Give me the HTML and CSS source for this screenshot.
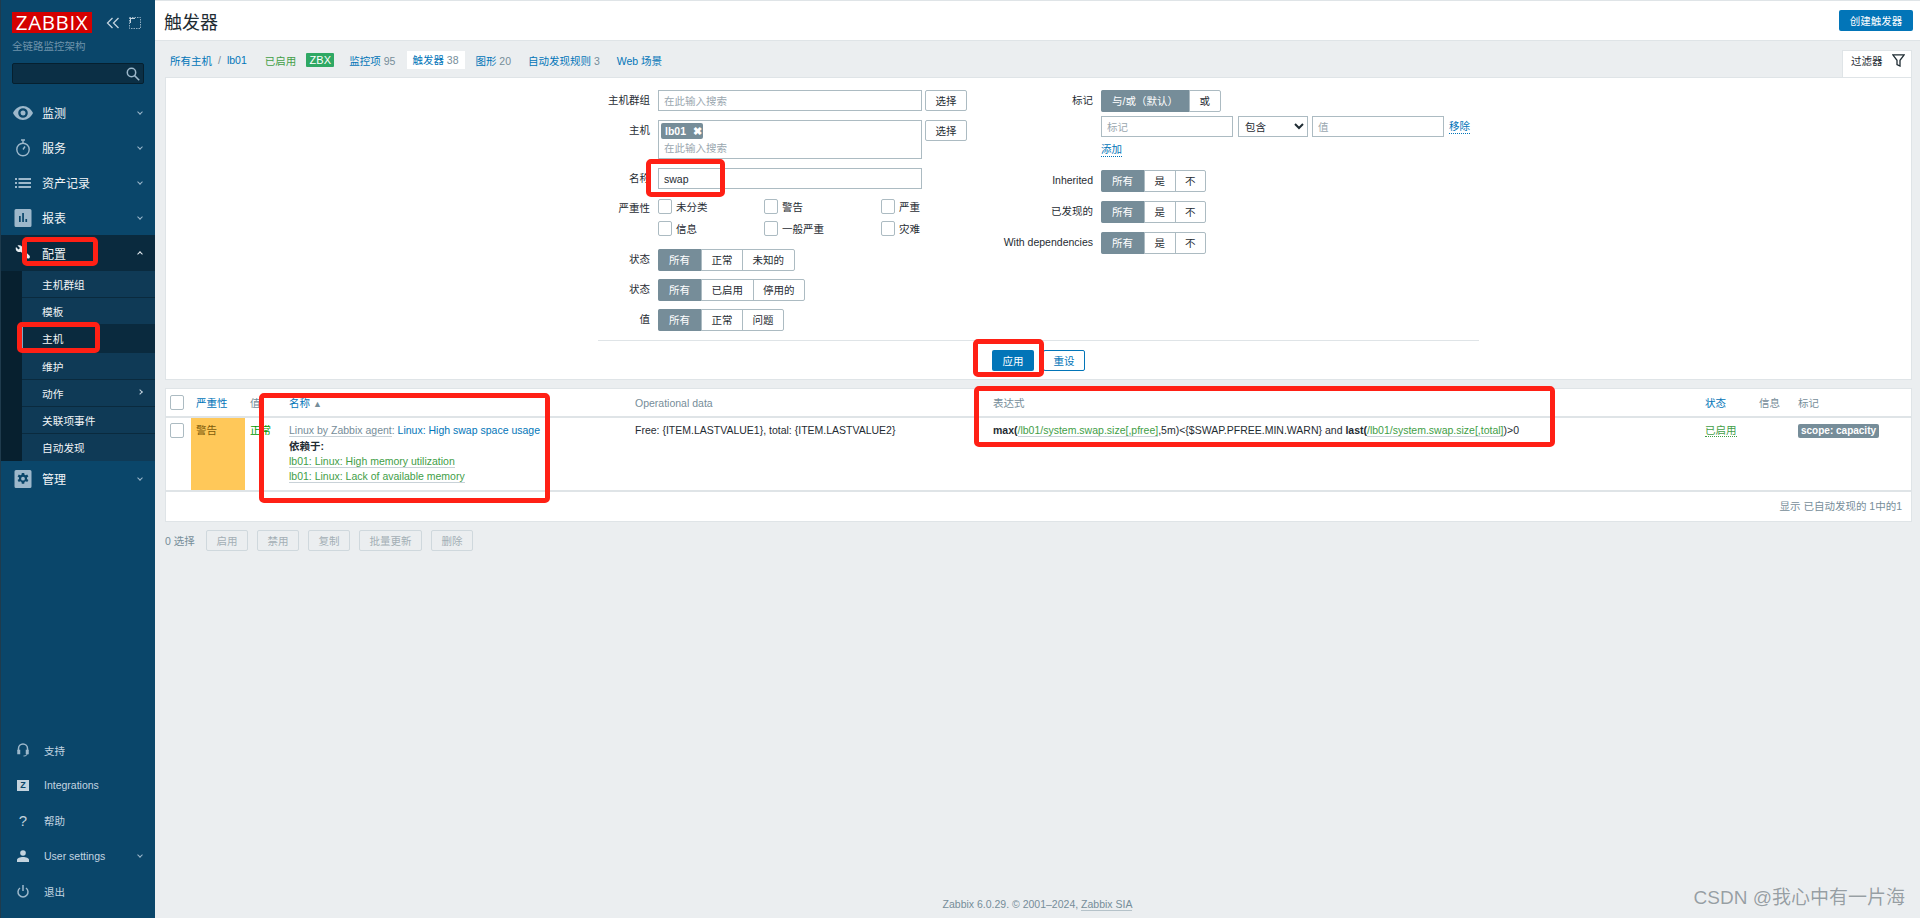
FILE: index.html
```html
<!DOCTYPE html>
<html lang="zh-CN">
<head>
    <meta charset="UTF-8">
    <title>触发器</title>
    <link rel="stylesheet" href="styles.css">
</head>
<body>
    <aside class="sidebar">
        <div class="brand">
            <div class="logo">ZABBIX</div>
            <svg class="brand-icon" width="14" height="12" viewBox="0 0 14 12" fill="none" stroke="#c3d3de" stroke-width="1.3"><path d="M6.5 1 1.5 6l5 5M12.5 1l-5 5 5 5"/></svg>
            <svg class="brand-icon" width="12" height="12" viewBox="0 0 12 12" fill="none" stroke="#8fadc1" stroke-width="1" stroke-dasharray="1.5 1"><path d="M.5.5h11v11H.5z"/><path d="M1 1h5v1H2v4H1z" fill="#c3d3de" stroke="none"/></svg>
        </div>
        <div class="brand-sub">全链路监控架构</div>
        <div class="side-search">
            <svg width="14" height="14" viewBox="0 0 14 14" fill="none" stroke="#9db8cb" stroke-width="1.5"><circle cx="5.5" cy="5.5" r="4.2"/><path d="m8.6 8.6 4.6 4.6"/></svg>
        </div>

        <nav class="side-nav">
            <div class="nav-item">
                <svg class="nav-icon" width="20" height="14" viewBox="0 0 20 14"><path fill="#9db8cb" fill-rule="evenodd" d="M10 0c4.4 0 8 3 10 7-2 4-5.600 7-10 7S2 11 0 7c2-4 5.600-7 10-7zm0 2.200a4.800 4.800 0 1 0 0 9.600 4.800 4.800 0 0 0 0-9.600zM10 4.500a2.500 2.500 0 1 1 0 5 2.500 2.500 0 0 1 0-5z"/></svg>
                <span>监测</span><i class="chev down"></i>
            </div>
            <div class="nav-item">
                <svg class="nav-icon" width="20" height="18" viewBox="0 0 20 18" fill="none" stroke="#9db8cb" stroke-width="1.4"><circle cx="10" cy="10.500" r="6.200"/><path d="M8 1h4M10 1v3M10 10.500l2-3"/></svg>
                <span>服务</span><i class="chev down"></i>
            </div>
            <div class="nav-item">
                <svg class="nav-icon" width="20" height="12" viewBox="0 0 20 12" fill="#9db8cb"><path d="M2 1h2v2H2zM5.500 1H18v2H5.500zM2 5h2v2H2zM5.500 5H18v2H5.500zM2 9h2v2H2zM5.500 9H18v2H5.500z"/></svg>
                <span>资产记录</span><i class="chev down"></i>
            </div>
            <div class="nav-item">
                <svg class="nav-icon" width="20" height="18" viewBox="0 0 20 18"><path fill="#9db8cb" fill-rule="evenodd" d="M3 0h14a1.500 1.500 0 0 1 1.500 1.500v15A1.500 1.500 0 0 1 17 18H3a1.500 1.500 0 0 1-1.500-1.500v-15A1.500 1.500 0 0 1 3 0zm3 7v6h1.700V7zm3.200-3v9h1.700V4zm3.200 6v3h1.700v-3z"/></svg>
                <span>报表</span><i class="chev down"></i>
            </div>
            <div class="nav-item open">
                <svg class="nav-icon" width="20" height="18" viewBox="0 0 20 18"><path fill="#e8eef2" d="M4.500 1.500 7 4 5.500 5.500 3 3C2.200 5 3 7.500 5.500 8c1 .2 1.800 0 2.300-.2L14 14c.7.700 2 .7 2.500 0s.6-1.700-.1-2.400L10 5.500C10.300 3 8 .5 4.500 1.500z"/></svg>
                <span>配置</span><i class="chev up"></i>
            </div>
            <ul class="sub-nav">
                <li>主机群组</li>
                <li>模板</li>
                <li class="active">主机</li>
                <li>维护</li>
                <li class="has-more">动作<i class="chev right"></i></li>
                <li>关联项事件</li>
                <li>自动发现</li>
            </ul>
            <div class="nav-item">
                <svg class="nav-icon" width="20" height="18" viewBox="0 0 20 18"><path fill="#9db8cb" fill-rule="evenodd" d="M3 0h14a1.500 1.500 0 0 1 1.500 1.500v15A1.500 1.500 0 0 1 17 18H3a1.500 1.500 0 0 1-1.500-1.500v-15A1.500 1.500 0 0 1 3 0zm5.800 3-.3 1.700-1.200.6-1.500-.8-1.200 2 1.400 1.100v1.400L4.600 10l1.200 2 1.500-.7 1.200.7.300 1.700h2.400l.3-1.700 1.200-.7 1.500.7 1.200-2-1.400-1.100V7.600L15.400 6.500l-1.200-2-1.500.8-1.200-.6L11.200 3zM10 6.800a1.900 1.900 0 1 1 0 3.800 1.900 1.900 0 0 1 0-3.800z"/></svg>
                <span>管理</span><i class="chev down"></i>
            </div>
        </nav>

        <nav class="side-bottom">
            <div class="bottom-item">
                <svg width="12" height="14" viewBox="0 0 12 14" fill="none" stroke="#9db8cb" stroke-width="1.500"><path d="M1.500 8V5.500a4.500 4.500 0 0 1 9 0V8"/><path d="M1 7.500h1.500v3H1zM9.500 7.500H11v3H9.500z" fill="#9db8cb"/><path d="M10 11c0 1.500-1.500 2-3.500 2" stroke-width="1"/></svg>
                <span>支持</span>
            </div>
            <div class="bottom-item">
                <b class="z-icon">Z</b>
                <span>Integrations</span>
            </div>
            <div class="bottom-item">
                <b class="help-icon">?</b>
                <span>帮助</span>
            </div>
            <div class="bottom-item">
                <svg width="12" height="12" viewBox="0 0 12 12" fill="#c3d3de"><circle cx="6" cy="3" r="2.800"/><path d="M0 12V10c0-2 3-3 6-3s6 1 6 3v2z"/></svg>
                <span>User settings</span><i class="chev down"></i>
            </div>
            <div class="bottom-item">
                <svg width="12" height="13" viewBox="0 0 12 13" fill="none" stroke="#9db8cb" stroke-width="1.500"><path d="M3 3a5 5 0 1 0 6 0M6 0v6"/></svg>
                <span>退出</span>
            </div>
        </nav>
    </aside>

    <div class="page">
        <header class="page-header">
            <h1>触发器</h1>
            <button class="btn-primary btn-create">创建触发器</button>
        </header>

        <main class="content">
            <div class="host-nav">
                <div class="host-links">
                    <a class="crumb">所有主机</a><span class="slash">/</span><a class="crumb-host">lb01</a>
                    <span class="host-on">已启用</span>
                    <span class="zbx">ZBX</span>
                    <a class="tab-items">监控项 <em>95</em></a>
                    <a class="tab-current">触发器 <em>38</em></a>
                    <a class="tab">图形 <em>20</em></a>
                    <a class="tab">自动发现规则 <em>3</em></a>
                    <a class="tab">Web 场景</a>
                </div>
                <div class="filter-tab">
                    过滤器
                    <svg width="13" height="13" viewBox="0 0 13 13" fill="none" stroke="#1f2c33" stroke-width="1.300"><path d="M.8.800h11.400L8 6.300V12L5 10.500V6.300z"/></svg>
                </div>
            </div>

            <section class="filter-box">
                <div class="filter-inner">
                    <div class="filter-cols">
                        <div class="form-col form-left">
                            <label>主机群组</label>
                            <div class="field-line"><input class="text-in" placeholder="在此输入搜索"><button class="btn-alt">选择</button></div>
                            <label>主机</label>
                            <div class="field-line">
                                <div class="multi-in"><span class="host-tag">lb01<b>✖</b></span><span class="ph">在此输入搜索</span></div>
                                <button class="btn-alt">选择</button>
                            </div>
                            <label>名称</label>
                            <div class="field-line"><input class="text-in" value="swap"></div>
                            <label>严重性</label>
                            <div class="check-grid">
                                <span class="check"><i></i>未分类</span>
                                <span class="check"><i></i>警告</span>
                                <span class="check"><i></i>严重</span>
                                <span class="check"><i></i>信息</span>
                                <span class="check"><i></i>一般严重</span>
                                <span class="check"><i></i>灾难</span>
                            </div>
                            <label>状态</label>
                            <div class="seg"><span class="on">所有</span><span>正常</span><span>未知的</span></div>
                            <label>状态</label>
                            <div class="seg"><span class="on">所有</span><span>已启用</span><span>停用的</span></div>
                            <label>值</label>
                            <div class="seg"><span class="on">所有</span><span>正常</span><span>问题</span></div>
                        </div>
                        <div class="form-col form-right">
                            <label>标记</label>
                            <div class="tag-block">
                                <div class="seg"><span class="on wide">与/或（默认）</span><span>或</span></div>
                                <div class="tag-row">
                                    <input class="text-in tag-in" placeholder="标记">
                                    <select class="tag-select"><option>包含</option></select>
                                    <input class="text-in tag-in" placeholder="值">
                                    <a class="dotted">移除</a>
                                </div>
                                <a class="dotted add-link">添加</a>
                            </div>
                            <label>Inherited</label>
                            <div class="seg"><span class="on">所有</span><span>是</span><span>不</span></div>
                            <label>已发现的</label>
                            <div class="seg"><span class="on">所有</span><span>是</span><span>不</span></div>
                            <label>With dependencies</label>
                            <div class="seg"><span class="on">所有</span><span>是</span><span>不</span></div>
                        </div>
                    </div>
                    <div class="filter-actions">
                        <button class="btn-primary">应用</button>
                        <button class="btn-outline">重设</button>
                    </div>
                </div>
            </section>

            <section class="list-card">
                <table class="list-table">
                    <colgroup>
                        <col class="c-check"><col class="c-sev"><col class="c-val"><col class="c-name"><col class="c-op"><col class="c-expr"><col class="c-state"><col class="c-info"><col>
                    </colgroup>
                    <thead>
                        <tr>
                            <th><i class="box"></i></th>
                            <th><a>严重性</a></th>
                            <th>值</th>
                            <th><a>名称</a> <span class="sort">▲</span></th>
                            <th>Operational data</th>
                            <th>表达式</th>
                            <th><a>状态</a></th>
                            <th>信息</th>
                            <th>标记</th>
                        </tr>
                    </thead>
                    <tbody>
                        <tr>
                            <td><i class="box"></i></td>
                            <td class="sev-warn">警告</td>
                            <td class="val-ok">正常</td>
                            <td>
                                <a class="under gray">Linux by Zabbix agent</a><span class="gray">:</span> <a class="blue">Linux: High swap space usage</a>
                                <div class="dep-title">依赖于:</div>
                                <div class="dep"><a class="under green">lb01: Linux: High memory utilization</a></div>
                                <div class="dep"><a class="under green">lb01: Linux: Lack of available memory</a></div>
                            </td>
                            <td>Free: {ITEM.LASTVALUE1}, total: {ITEM.LASTVALUE2}</td>
                            <td class="expr"><b>max(</b><a class="under green">/lb01/system.swap.size[,pfree]</a>,5m)&lt;{$SWAP.PFREE.MIN.WARN} and <b>last(</b><a class="under green">/lb01/system.swap.size[,total]</a>)&gt;0</td>
                            <td><a class="state-on">已启用</a></td>
                            <td></td>
                            <td><span class="tag-pill">scope: capacity</span></td>
                        </tr>
                    </tbody>
                </table>
                <div class="list-foot">显示 已自动发现的 1中的1</div>
            </section>

            <div class="mass-actions">
                <span class="sel-count">0 选择</span>
                <button>启用</button><button>禁用</button><button>复制</button><button>批量更新</button><button>删除</button>
            </div>
        </main>

        <footer class="page-footer">Zabbix 6.0.29. © 2001–2024, <a>Zabbix SIA</a></footer>
    </div>

    <!-- red annotation boxes drawn over the screenshot -->
    <div class="mark mark-config"></div>
    <div class="mark mark-host"></div>
    <div class="mark mark-swap"></div>
    <div class="mark mark-apply"></div>
    <div class="mark mark-name"></div>
    <div class="mark mark-expr"></div>
    <div class="watermark">CSDN @我心中有一片海</div>
</body>
</html>
```

FILE: styles.css
```css
:root {
    --side-bg: #0a466a;
    --side-dark: #0a2a3e;
    --side-sub: #0f3a56;
    --bg: #ebeef0;
    --line: #dfe4e7;
    --field: #acbbc2;
    --text: #1f2c33;
    --muted: #768d99;
    --link: #0275b8;
    --green: #429e47;
}

* {
    margin: 0;
    padding: 0;
    box-sizing: border-box;
}

html, body {
    height: 918px;
    overflow: hidden;
}

body {
    position: relative;
    display: flex;
    font-family: "Liberation Sans", "Noto Sans CJK SC", sans-serif;
    font-size: 10.5px;
    color: var(--text);
    background-color: var(--bg);
}

i, em {
    font-style: normal;
}

/* sidebar */
.sidebar {
    width: 155px;
    height: 918px;
    display: flex;
    flex-direction: column;
    background-color: var(--side-bg);
    border-left: 1px solid #1f3b4d;
    color: #f2f5f7;
}

.brand {
    display: flex;
    align-items: center;
    padding: 12px 0 0 11px;
}

.logo {
    width: 80px;
    height: 21px;
    background-color: #d40000;
    color: #fff;
    font-family: "Open Sans", "Liberation Sans", sans-serif;
    font-size: 20.5px;
    line-height: 21px;
    text-align: center;
    letter-spacing: 0.6px;
}

.brand-icon {
    margin-left: 14px;
}

.brand-icon + .brand-icon {
    margin-left: 9px;
}

.brand-sub {
    margin: 7px 0 0 11px;
    color: #6f93aa;
    font-size: 10.5px;
    line-height: 12px;
}

.side-search {
    width: 132px;
    height: 21px;
    margin: 11px 0 0 11px;
    padding: 3px 3px 0 0;
    background-color: #0b2f45;
    border: 1px solid #06202f;
    border-radius: 2px;
    text-align: right;
}

.side-nav {
    margin-top: 11px;
}

.nav-item {
    position: relative;
    display: flex;
    align-items: center;
    height: 35px;
    padding-left: 12px;
    font-size: 12px;
}

.nav-item.open {
    height: 36px;
    background-color: var(--side-dark);
}

.nav-icon {
    flex: none;
    margin-right: 9px;
    width: 20px;
}

.chev {
    position: absolute;
    right: 13px;
    top: 50%;
    width: 4px;
    height: 4px;
    margin-top: -3px;
    border-right: 1px solid #9db8cb;
    border-bottom: 1px solid #9db8cb;
    transform: rotate(45deg);
}

.chev.up {
    margin-top: -1px;
    transform: rotate(225deg);
    border-color: #e8eef2;
}

.chev.right {
    transform: rotate(-45deg);
    border-color: #c3d3de;
}

.sub-nav {
    list-style: none;
    padding-left: 21px;
    background-color: #07202f;
    font-size: 10.7px;
}

.sub-nav li {
    position: relative;
    height: 27.200px;
    padding-left: 20px;
    line-height: 28px;
    background-color: var(--side-sub);
    border-bottom: 1px solid #0a2a3e;
}

.sub-nav li.active {
    background-color: var(--side-dark);
    border-left: 1px solid #7fa8c4;
    padding-left: 19px;
}

.sub-nav li:last-child {
    border-bottom: none;
}

.side-bottom {
    margin-top: auto;
    padding-bottom: 9px;
    color: #c3d5e1;
}

.bottom-item {
    position: relative;
    display: flex;
    align-items: center;
    height: 35.300px;
    padding-left: 16px;
}

.bottom-item svg, .z-icon, .help-icon {
    flex: none;
    width: 12px;
    margin-right: 15px;
    text-align: center;
}

.z-icon {
    height: 11px;
    background-color: #c3d3de;
    color: var(--side-bg);
    font-size: 9px;
    line-height: 11px;
}

.help-icon {
    color: #c3d3de;
    font-weight: normal;
    font-size: 15px;
}

/* main page */
.page {
    flex: 1;
    display: flex;
    flex-direction: column;
    min-width: 0;
    height: 918px;
    border-top: 1px solid var(--line);
}

.page-header {
    display: flex;
    justify-content: space-between;
    align-items: center;
    height: 40px;
    padding: 0 7px 0 9px;
    background-color: #fff;
    border-bottom: 1px solid var(--line);
}

.page-header h1 {
    font-size: 18px;
    font-weight: normal;
}

.btn-primary {
    height: 21px;
    width: 42px;
    background-color: var(--link);
    color: #fff;
    border: none;
    border-radius: 2px;
    font: inherit;
}

.btn-create {
    width: 74px;
}

.content {
    flex: 1;
    padding: 0 8px 0 10px;
}

.host-nav {
    display: flex;
    justify-content: space-between;
    align-items: flex-end;
    height: 36px;
}

.host-links {
    display: flex;
    align-items: center;
    height: 18px;
    margin-bottom: 8px;
    padding-left: 5px;
    color: var(--link);
    white-space: nowrap;
}

.host-links em {
    color: var(--muted);
}

.crumb {
    margin-right: 6px;
}

.slash {
    margin-right: 6px;
    color: var(--muted);
}

.crumb-host {
    margin-right: 18px;
}

.host-on {
    margin-right: 10px;
    color: var(--green);
}

.zbx {
    width: 28px;
    height: 14px;
    margin-right: 15px;
    background-color: #2fa864;
    color: #fff;
    border-radius: 1px;
    font-size: 11px;
    line-height: 14px;
    text-align: center;
}

.tab-items {
    margin-right: 12px;
}

.tab-current {
    width: 58px;
    height: 18px;
    margin-right: 10px;
    padding-left: 5px;
    background-color: #fff;
    line-height: 18px;
}

.tab {
    margin-right: 17px;
}

.filter-tab {
    display: flex;
    align-items: center;
    justify-content: space-between;
    width: 70px;
    height: 27px;
    padding: 0 6px 7px 8px;
    background-color: #fff;
    border: 1px solid var(--line);
    border-bottom: none;
}

.filter-box {
    height: 303px;
    background-color: #fff;
    border: 1px solid var(--line);
}

.filter-inner {
    width: 881px;
    margin: 0 auto;
}

.filter-cols {
    display: flex;
    height: 262px;
    padding-top: 12px;
}

.form-col {
    display: grid;
    row-gap: 9px;
    align-content: start;
    align-items: start;
}

.form-col label {
    text-align: right;
    padding-top: 3px;
    line-height: 14px;
    white-space: nowrap;
}

.form-left {
    width: 393px;
    grid-template-columns: 52px 1fr;
    column-gap: 8px;
}

.form-left .seg {
    margin-bottom: -1px;
}

.form-right {
    width: 488px;
    grid-template-columns: 102px 1fr;
    column-gap: 8px;
}

.field-line {
    display: flex;
    align-items: flex-start;
    gap: 3px;
}

.text-in {
    width: 264px;
    height: 21px;
    padding: 0 5px;
    border: 1px solid var(--field);
    font: inherit;
    color: var(--text);
    outline: none;
}

.text-in::placeholder, .ph {
    color: #9aa7af;
}

.multi-in {
    display: flex;
    flex-direction: column;
    align-items: flex-start;
    width: 264px;
    height: 39px;
    padding: 2px;
    border: 1px solid var(--field);
}

.ph {
    margin: 1px 0 0 3px;
}

.host-tag {
    width: 42px;
    height: 16px;
    padding-left: 4px;
    background-color: var(--muted);
    color: #fff;
    border-radius: 2px;
    font-weight: bold;
    line-height: 16px;
}

.host-tag b {
    margin-left: 7px;
    font-size: 11px;
}

.btn-alt {
    width: 42px;
    height: 21px;
    background-color: #fff;
    border: 1px solid var(--field);
    border-radius: 2px;
    font: inherit;
    color: var(--text);
}

.check-grid {
    display: grid;
    grid-template-columns: 106px 117px 1fr;
    row-gap: 7px;
    margin: 1px 0 4px;
}

.check {
    display: flex;
    align-items: center;
    height: 15px;
    gap: 4px;
}

.check i, .box {
    display: block;
    width: 14px;
    height: 15px;
    background-color: #fff;
    border: 1px solid var(--field);
    border-radius: 2px;
}

.seg {
    display: inline-flex;
    justify-self: start;
    height: 22px;
    border: 1px solid var(--field);
    border-radius: 2px;
    background-color: #fff;
    line-height: 20px;
}

.seg span {
    padding: 0 9.500px;
    border-left: 1px solid var(--field);
}

.seg span:first-child {
    border-left: none;
}

.seg .on {
    width: 43px;
    margin: -1px 0 -1px -1px;
    padding: 1px 0;
    background-color: var(--muted);
    color: #fff;
    text-align: center;
    border-radius: 2px 0 0 2px;
}

.seg .on.wide {
    width: 88px;
}

.tag-block {
    display: flex;
    flex-direction: column;
    align-items: flex-start;
}

.tag-row {
    display: flex;
    align-items: center;
    margin-top: 4px;
}

.tag-in {
    width: 132px;
}

.tag-select {
    width: 70px;
    height: 21px;
    margin: 0 4px 0 5px;
    padding-left: 2px;
    background-color: #fff;
    border: 1px solid var(--field);
    font: inherit;
    color: var(--text);
}

.dotted {
    color: var(--link);
    border-bottom: 1px dotted var(--link);
    line-height: 13px;
}

.tag-row .dotted {
    margin-left: 5px;
}

.add-link {
    margin-top: 6px;
    margin-bottom: 4px;
}

.filter-actions {
    display: flex;
    justify-content: center;
    gap: 9px;
    height: 39px;
    padding-top: 9px;
    border-top: 1px solid var(--line);
}

.btn-outline {
    width: 42px;
    height: 21px;
    background-color: #fff;
    color: var(--link);
    border: 1px solid var(--link);
    border-radius: 2px;
    font: inherit;
}

/* list */
.list-card {
    margin-top: 8px;
    background-color: #fff;
    border: 1px solid var(--line);
}

.list-table {
    width: 100%;
    table-layout: fixed;
    border-collapse: collapse;
}

.c-check { width: 25px; }
.c-sev { width: 54px; }
.c-val { width: 39px; }
.c-name { width: 346px; }
.c-op { width: 358px; }
.c-expr { width: 712px; }
.c-state { width: 54px; }
.c-info { width: 39px; }

.list-table th {
    height: 28px;
    padding: 0 5px;
    text-align: left;
    font-weight: normal;
    color: var(--muted);
    border-bottom: 2px solid var(--line);
}

.list-table th a {
    color: var(--link);
}

.sort {
    font-size: 9px;
    color: var(--muted);
}

.list-table td {
    height: 74px;
    padding: 5px;
    vertical-align: top;
    line-height: 15px;
    border-bottom: 2px solid var(--line);
}

.list-table td:first-child, .list-table th:first-child {
    padding: 0 0 0 4px;
}

.list-table td:first-child .box {
    margin-top: 5px;
}

.sev-warn {
    background-color: #ffc859;
    color: #7d5a0a;
}

.val-ok {
    color: #009900;
}

.gray {
    color: var(--muted);
}

.blue {
    color: var(--link);
}

.green {
    color: var(--green);
}

.under {
    border-bottom: 1px solid #c9d2d8;
}

.dep-title {
    margin-top: 1px;
    font-weight: bold;
}

.dep {
    height: 15px;
}

.state-on {
    color: var(--green);
    border-bottom: 1px dotted var(--green);
}

.tag-pill {
    display: inline-block;
    height: 14px;
    padding: 0 3px;
    background-color: var(--muted);
    color: #fff;
    border-radius: 2px;
    font-size: 10px;
    font-weight: bold;
    line-height: 14px;
}

.list-foot {
    height: 29px;
    padding-right: 9px;
    color: var(--muted);
    line-height: 28px;
    text-align: right;
}

.mass-actions {
    display: flex;
    align-items: center;
    gap: 9px;
    margin-top: 8px;
}

.sel-count {
    width: 32px;
    color: var(--muted);
}

.mass-actions button {
    height: 21px;
    padding: 0 9.500px;
    background-color: #ebeef0;
    border: 1px solid #cfd8dd;
    border-radius: 2px;
    font: inherit;
    color: #a3aeb5;
}

.page-footer {
    height: 28px;
    padding-top: 7px;
    color: var(--muted);
    line-height: 14px;
    text-align: center;
}

.page-footer a {
    border-bottom: 1px solid #b5c2c9;
}

/* annotations lie over the page */
.mark {
    position: absolute;
    border: 5px solid #ff2015;
    border-radius: 5px;
}

.mark-config { left: 22px; top: 237px; width: 76px; height: 29px; }
.mark-host { left: 17px; top: 322px; width: 83px; height: 31px; }
.mark-swap { left: 646px; top: 159px; width: 79px; height: 38px; }
.mark-apply { left: 973px; top: 339px; width: 71px; height: 38px; }
.mark-name { left: 259px; top: 393px; width: 291px; height: 110px; }
.mark-expr { left: 974px; top: 386px; width: 581px; height: 61px; }

.watermark {
    position: absolute;
    right: 15px;
    top: 886px;
    color: #979fa4;
    font-size: 19px;
    line-height: 24px;
    text-shadow: 0 0 1px #fff;
}
```
